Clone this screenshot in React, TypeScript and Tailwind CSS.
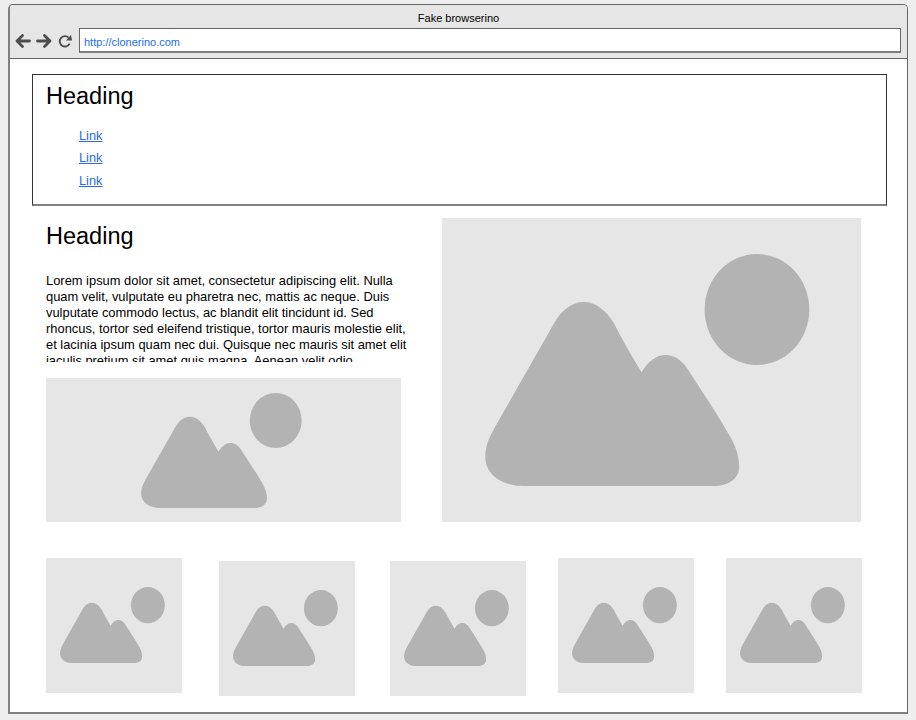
const MOUNTAIN =
  "M42.3 238.7 C42.3 226 47 219 51.3 210.3 L111.3 105.3 C119 92 129 84 141.3 84 C153 84 163 92 171.3 105.3 C180 122 189 138 199 154.3 C206 143 214 137 223 137 C232 137 239 142 244.7 150.3 C260 174 275 196 288 218.7 C292 226 297 236 297 248.7 C297 260 287 268 271.3 268 L81.3 268 C58 268 42.3 256 42.3 238.7 Z";

function ImageIcon({ className }: { className: string }) {
  return (
    <svg viewBox="42 36 326 232" className={className} preserveAspectRatio="none">
      <path d={MOUNTAIN} fill="#b3b3b3" />
      <ellipse cx="314.8" cy="91.5" rx="52.5" ry="55.5" fill="#b3b3b3" />
    </svg>
  );
}

function Placeholder({ className, icon }: { className: string; icon: string }) {
  return (
    <div className={`flex items-center justify-center bg-[#e6e6e6] shrink-0 ${className}`}>
      <ImageIcon className={icon} />
    </div>
  );
}

function NavIcons() {
  return (
    <div className="flex items-center gap-[5px] w-[57px] shrink-0">
      <svg width="16" height="16" viewBox="0 0 16 16" fill="none" stroke="#4d4d4d" strokeWidth="2.8" strokeLinecap="round" strokeLinejoin="round">
        <path d="M14.5 8 H2 M7.5 2.5 L2 8 L7.5 13.5" />
      </svg>
      <svg width="16" height="16" viewBox="0 0 16 16" fill="none" stroke="#4d4d4d" strokeWidth="2.8" strokeLinecap="round" strokeLinejoin="round">
        <path d="M1.5 8 H14 M8.5 2.5 L14 8 L8.5 13.5" />
      </svg>
      <svg width="14" height="14" viewBox="0 0 14 14" fill="none" stroke="#4d4d4d" strokeWidth="1.9" className="ml-[1px]">
        <path d="M11.6 9.6 A5.2 5.2 0 1 1 10.6 3.6" />
        <path d="M8 6.6 L14 6.6 L13 1 Z" fill="#4d4d4d" stroke="none" />
      </svg>
    </div>
  );
}

function HeadingLinks() {
  return (
    <section className="ml-[22px] w-[855px] h-[132px] border border-[#333333] border-b-2 border-b-[#808080] pl-[13px] pt-[5px]">
      <h2 className="text-[23.5px] leading-[32px] text-black">Heading</h2>
      <ul className="ml-[33px] mt-[16px] flex flex-col text-[12.8px] leading-[16px]">
        <li><a href="#" className="text-[#2a6be0] underline">Link</a></li>
        <li className="mt-[6px]"><a href="#" className="text-[#2a6be0] underline">Link</a></li>
        <li className="mt-[7px]"><a href="#" className="text-[#2a6be0] underline">Link</a></li>
      </ul>
    </section>
  );
}

export default function App() {
  return (
    <div className="h-[720px] w-[916px] bg-[#eeeeee] pl-[8px] pt-[4px] overflow-hidden font-['Liberation_Sans',Arial,sans-serif] text-black">
      <div className="w-[900px] h-[710px] rounded-t-[5px] border border-[#666666] border-l-2 border-l-[#808080] border-b-2 border-b-[#808080] bg-white overflow-hidden">
        <header className="h-[54px] bg-[#e6e6e6] border-b border-[#666666]">
          <p className="text-center text-[11px] leading-[13px] pt-[7px]">Fake browserino</p>
          <div className="flex items-center mt-[3px] pl-[5px]">
            <NavIcons />
            <div className="ml-[7px] w-[822px] h-[25px] bg-white border border-[#666666] border-b-2 border-b-[#808080] pl-[4px] text-[11px] leading-[25px] pt-[1px] text-[#1a6ef0]">
              http://clonerino.com
            </div>
          </div>
        </header>

        <main className="pt-[15px]">
          <HeadingLinks />

          <div className="flex items-start pt-[12px] pl-[36px]">
            <div className="w-[355px] shrink-0">
              <h2 className="text-[23.5px] leading-[32px] pt-[2px]">Heading</h2>
              <p className="mt-[21px] w-[365px] h-[89px] overflow-hidden text-[12.9px] leading-[16px]">
                Lorem ipsum dolor sit amet, consectetur adipiscing elit. Nulla quam velit, vulputate eu pharetra nec, mattis ac neque. Duis vulputate commodo lectus, ac blandit elit tincidunt id. Sed rhoncus, tortor sed eleifend tristique, tortor mauris molestie elit, et lacinia ipsum quam nec dui. Quisque nec mauris sit amet elit iaculis pretium sit amet quis magna. Aenean velit odio, elementum in tempus ut, vehicula eu diam.
              </p>
              <Placeholder className="mt-[16px] w-[355px] h-[144px]" icon="w-[161px] h-[115px] mr-[4px]" />
            </div>
            <Placeholder className="ml-[41px] w-[419px] h-[304px]" icon="w-[325px] h-[232px] mr-[8px]" />
          </div>

          <div className="flex items-start pt-[36px] pl-[36px]">
            <Placeholder className="w-[136px] h-[135px]" icon="w-[105px] h-[76px] mr-[3px] mb-[1px]" />
            <Placeholder className="ml-[37px] mt-[3px] w-[136px] h-[135px]" icon="w-[105px] h-[76px] mr-[3px] mb-[1px]" />
            <Placeholder className="ml-[35px] mt-[3px] w-[136px] h-[135px]" icon="w-[105px] h-[76px] mr-[3px] mb-[1px]" />
            <Placeholder className="ml-[32px] w-[136px] h-[135px]" icon="w-[105px] h-[76px] mr-[3px] mb-[1px]" />
            <Placeholder className="ml-[32px] w-[136px] h-[135px]" icon="w-[105px] h-[76px] mr-[3px] mb-[1px]" />
          </div>
        </main>
      </div>
    </div>
  );
}
